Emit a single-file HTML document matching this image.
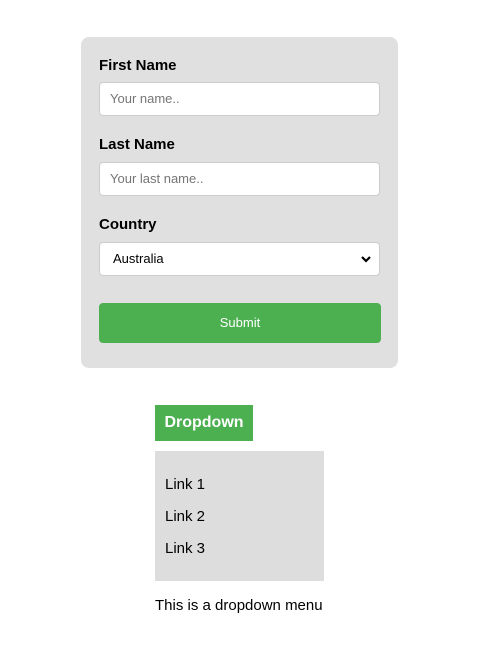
<!DOCTYPE html>
<html><head><style>
body{margin:0;width:503px;height:672px;background:#fff;font-family:"Liberation Sans",Arial,sans-serif;position:relative}
.a{position:absolute}
.card{left:81px;top:37px;width:317px;height:331px;background:#e0e0e0;border-radius:8px}
.lbl{left:99px;font-size:15px;font-weight:bold;color:#000}
.in{left:99px;width:279px;height:32px;background:#fff;border:1px solid #ccc;border-radius:4px;font-size:13px;color:#757575;line-height:32px;text-indent:10px}
.btn{left:99px;top:303px;width:282px;height:40px;background:#4caf50;border-radius:4px;color:#fff;font-size:13px;text-align:center;line-height:40px}
.lk{left:165px;font-size:15px;color:#000}
</style></head><body>
<div class="a card"></div>
<div class="a lbl" style="top:57px">First Name</div>
<div class="a in" style="top:82px">Your name..</div>
<div class="a lbl" style="top:136px">Last Name</div>
<div class="a in" style="top:162px">Your last name..</div>
<div class="a lbl" style="top:216px">Country</div>
<div class="a in" style="top:242px;color:#000;text-indent:13px">Australia
<svg class="a" style="right:8px;top:12px" width="10" height="8" viewBox="0 0 10 8"><path d="M1 2 L5 6 L9 2" stroke="#000" stroke-width="2.2" fill="none"/></svg></div>
<div class="a btn">Submit</div>
<div class="a" style="left:155px;top:405px;width:98px;height:36px;background:#4caf50;color:#fff;font-weight:bold;font-size:16px;line-height:36px;text-align:center">Dropdown</div>
<div class="a" style="left:155px;top:451px;width:169px;height:130px;background:#dddddd"></div>
<div class="a lk" style="top:476px">Link 1</div>
<div class="a lk" style="top:508px">Link 2</div>
<div class="a lk" style="top:540px">Link 3</div>
<div class="a" style="left:155px;top:597px;font-size:15px">This is a dropdown menu</div>
</body></html>
